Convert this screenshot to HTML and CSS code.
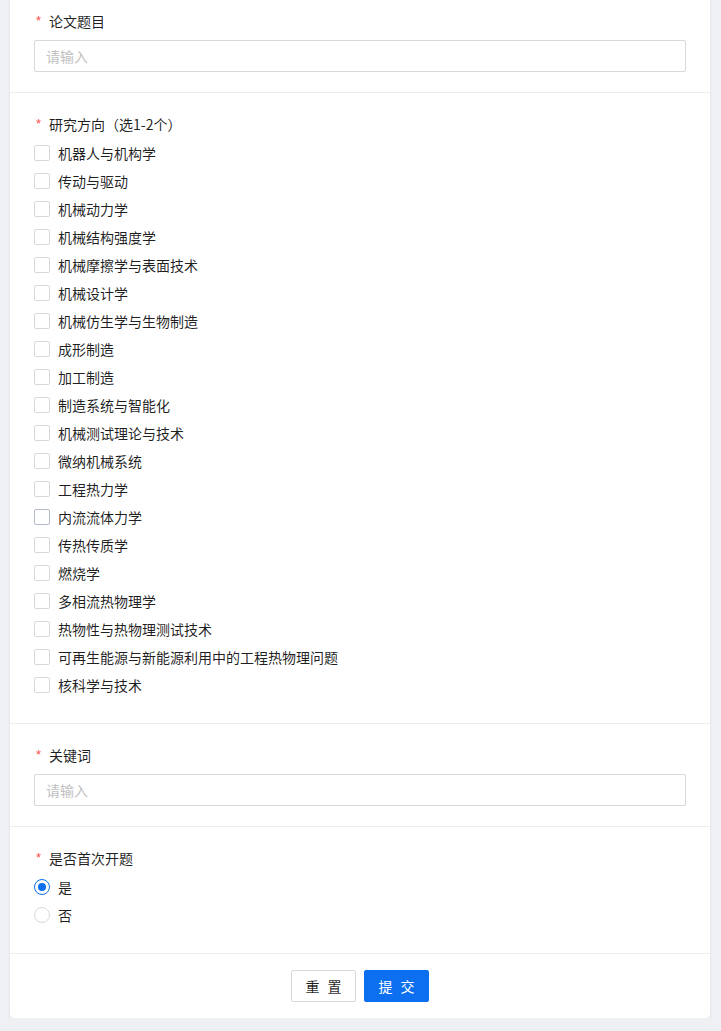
FILE: index.html
```html
<!DOCTYPE html>
<html lang="zh-CN">
<head>
<meta charset="utf-8">
<title>表单</title>
<link rel="stylesheet" href="styles.css">
</head>
<body>
<div class="card">
  <div class="section first">
    <div class="label"><span class="req">*</span>论文题目</div>
    <div class="input"><span class="ph">请输入</span></div>
  </div>
  <div class="section">
    <div class="label"><span class="req">*</span>研究方向（选1-2个）</div>
    <div class="options">
      <div class="opt"><span class="box"></span>机器人与机构学</div>
      <div class="opt"><span class="box"></span>传动与驱动</div>
      <div class="opt"><span class="box"></span>机械动力学</div>
      <div class="opt"><span class="box"></span>机械结构强度学</div>
      <div class="opt"><span class="box"></span>机械摩擦学与表面技术</div>
      <div class="opt"><span class="box"></span>机械设计学</div>
      <div class="opt"><span class="box"></span>机械仿生学与生物制造</div>
      <div class="opt"><span class="box"></span>成形制造</div>
      <div class="opt"><span class="box"></span>加工制造</div>
      <div class="opt"><span class="box"></span>制造系统与智能化</div>
      <div class="opt"><span class="box"></span>机械测试理论与技术</div>
      <div class="opt"><span class="box"></span>微纳机械系统</div>
      <div class="opt"><span class="box"></span>工程热力学</div>
      <div class="opt"><span class="box hover"></span>内流流体力学</div>
      <div class="opt"><span class="box"></span>传热传质学</div>
      <div class="opt"><span class="box"></span>燃烧学</div>
      <div class="opt"><span class="box"></span>多相流热物理学</div>
      <div class="opt"><span class="box"></span>热物性与热物理测试技术</div>
      <div class="opt"><span class="box"></span>可再生能源与新能源利用中的工程热物理问题</div>
      <div class="opt"><span class="box"></span>核科学与技术</div>
    </div>
  </div>
  <div class="section">
    <div class="label"><span class="req">*</span>关键词</div>
    <div class="input"><span class="ph">请输入</span></div>
  </div>
  <div class="section">
    <div class="label"><span class="req">*</span>是否首次开题</div>
    <div class="options">
      <div class="opt"><span class="radio checked"></span>是</div>
      <div class="opt"><span class="radio"></span>否</div>
    </div>
  </div>
  <div class="actions">
    <button class="btn"><span>重</span><span>置</span></button>
    <button class="btn primary"><span>提</span><span>交</span></button>
  </div>
</div>
</body>
</html>
```

FILE: styles.css
```css
html, body {
  margin: 0;
  padding: 0;
  background: #eff0f4;
}
body {
  font-family: "Noto Sans CJK SC", "Noto Sans", sans-serif;
  font-size: 14px;
  color: rgba(0, 0, 0, 0.88);
  line-height: 22px;
}
.card {
  width: 700px;
  margin: 0 0 0 10px;
  background: #fff;
  border-radius: 0 0 4px 4px;
  box-shadow: 0 1px 3px rgba(0, 0, 0, 0.08);
  height: 1018px;
  box-sizing: border-box;
}
.section {
  padding: 20px 24px;
  border-bottom: 1px solid #ececec;
}
.section.first {
  padding-top: 10px;
}
.label {
  display: flex;
  align-items: center;
  height: 22px;
  margin-bottom: 8px;
}
.req {
  display: inline-block;
  width: 15px;
  padding-left: 2px;
  box-sizing: border-box;
  color: #ff4d4f;
  font-family: "Liberation Sans", sans-serif;
  font-size: 13px;
}
.input {
  height: 32px;
  box-sizing: border-box;
  border: 1px solid #d9d9d9;
  border-radius: 2px;
  padding: 0 11px;
  display: flex;
  align-items: center;
}
.ph {
  color: #bfbfbf;
}
.options {
  display: flex;
  flex-direction: column;
  gap: 6px;
  margin-top: -1px;
  margin-bottom: 7px;
}
.opt {
  display: flex;
  align-items: center;
  height: 22px;
}
.box {
  width: 16px;
  height: 16px;
  box-sizing: border-box;
  border: 1px solid #d9d9d9;
  border-radius: 2px;
  margin-right: 8px;
  flex: none;
}
.box.hover {
  border-color: #b4bccb;
}
.radio {
  width: 16px;
  height: 16px;
  box-sizing: border-box;
  border: 1px solid #d9d9d9;
  border-radius: 50%;
  margin-right: 8px;
  flex: none;
  position: relative;
}
.radio.checked {
  border-color: #0c6ff0;
}
.radio.checked::after {
  content: "";
  position: absolute;
  left: 3px;
  top: 3px;
  width: 8px;
  height: 8px;
  border-radius: 50%;
  background: #0c6ff0;
}
.actions {
  display: flex;
  justify-content: center;
  gap: 8px;
  padding: 16px 0;
}
.btn {
  height: 32px;
  width: 65px;
  padding: 0;
  display: inline-flex;
  align-items: center;
  justify-content: center;
  gap: 8px;
  font-family: "Noto Sans CJK SC", sans-serif;
  font-size: 14px;
  border: 1px solid #d9d9d9;
  border-radius: 2px;
  background: #fff;
  color: rgba(0, 0, 0, 0.88);
}
.btn.primary {
  background: #0c6ff0;
  border-color: #0c6ff0;
  color: #fff;
}
```
